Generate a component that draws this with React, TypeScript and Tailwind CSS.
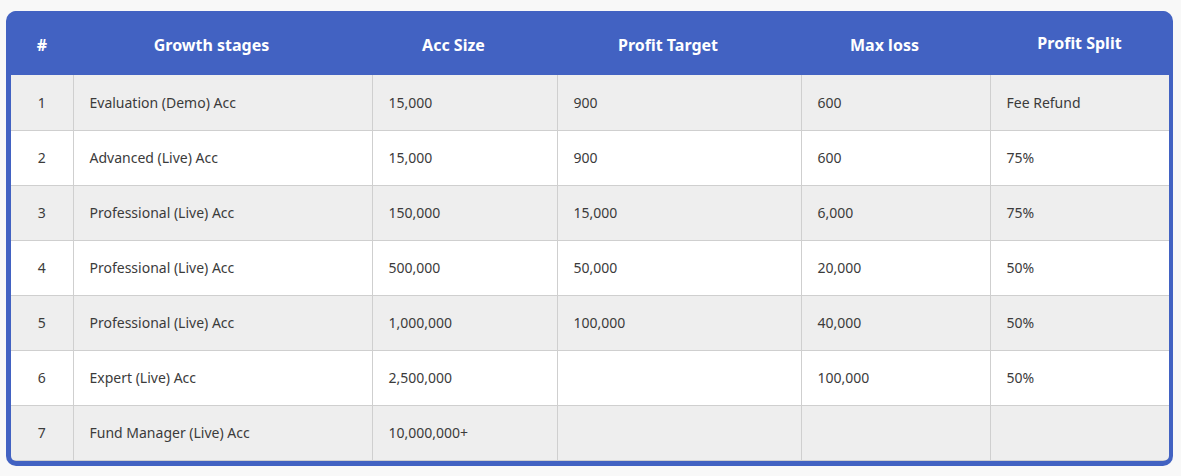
const headers = ['#', 'Growth stages', 'Acc Size', 'Profit Target', 'Max loss', 'Profit Split'];

const rows = [
  ['1', 'Evaluation (Demo) Acc', '15,000', '900', '600', 'Fee Refund'],
  ['2', 'Advanced (Live) Acc', '15,000', '900', '600', '75%'],
  ['3', 'Professional (Live) Acc', '150,000', '15,000', '6,000', '75%'],
  ['4', 'Professional (Live) Acc', '500,000', '50,000', '20,000', '50%'],
  ['5', 'Professional (Live) Acc', '1,000,000', '100,000', '40,000', '50%'],
  ['6', 'Expert (Live) Acc', '2,500,000', '', '100,000', '50%'],
  ['7', 'Fund Manager (Live) Acc', '10,000,000+', '', '', ''],
];

const widths = ['w-[62px]', 'w-[299px]', 'w-[185px]', 'w-[244px]', 'w-[189px]', ''];

export default function App() {
  return (
    <div className="min-h-[476px] bg-[#f8f8f8] pt-[11px] px-[6px] font-['Noto_Sans',sans-serif]">
      <div className="w-[1167px] overflow-hidden rounded-[10px] border-l-[5px] border-r-[4px] border-b-[5px] border-[#4262c2] bg-[#4262c2]">
        <table className="w-full table-fixed border-collapse">
          <colgroup>
            {widths.map((w, i) => (
              <col key={i} className={w} />
            ))}
          </colgroup>
          <thead>
            <tr className="h-[64px] bg-[#4262c2]">
              {headers.map((h, i) => (
                <th
                  key={h}
                  className={`text-center text-[16px] font-bold text-white ${
                    i === 5 ? '' : i === 0 ? 'pt-[4px]' : 'pt-[4px] pr-[22px]'
                  }`}
                >
                  {h}
                </th>
              ))}
            </tr>
          </thead>
          <tbody>
            {rows.map((r, ri) => (
              <tr key={ri} className={ri % 2 === 0 ? 'h-[55px] bg-[#eeeeee]' : 'h-[55px] bg-white'}>
                {r.map((c, ci) => (
                  <td
                    key={ci}
                    className={`border-b border-[#cfcfcf] text-[14px] text-[#3b3b3b] ${
                      ci === 0 ? 'text-center' : 'border-l pl-[16px]'
                    }`}
                  >
                    {c}
                  </td>
                ))}
              </tr>
            ))}
          </tbody>
        </table>
      </div>
    </div>
  );
}
